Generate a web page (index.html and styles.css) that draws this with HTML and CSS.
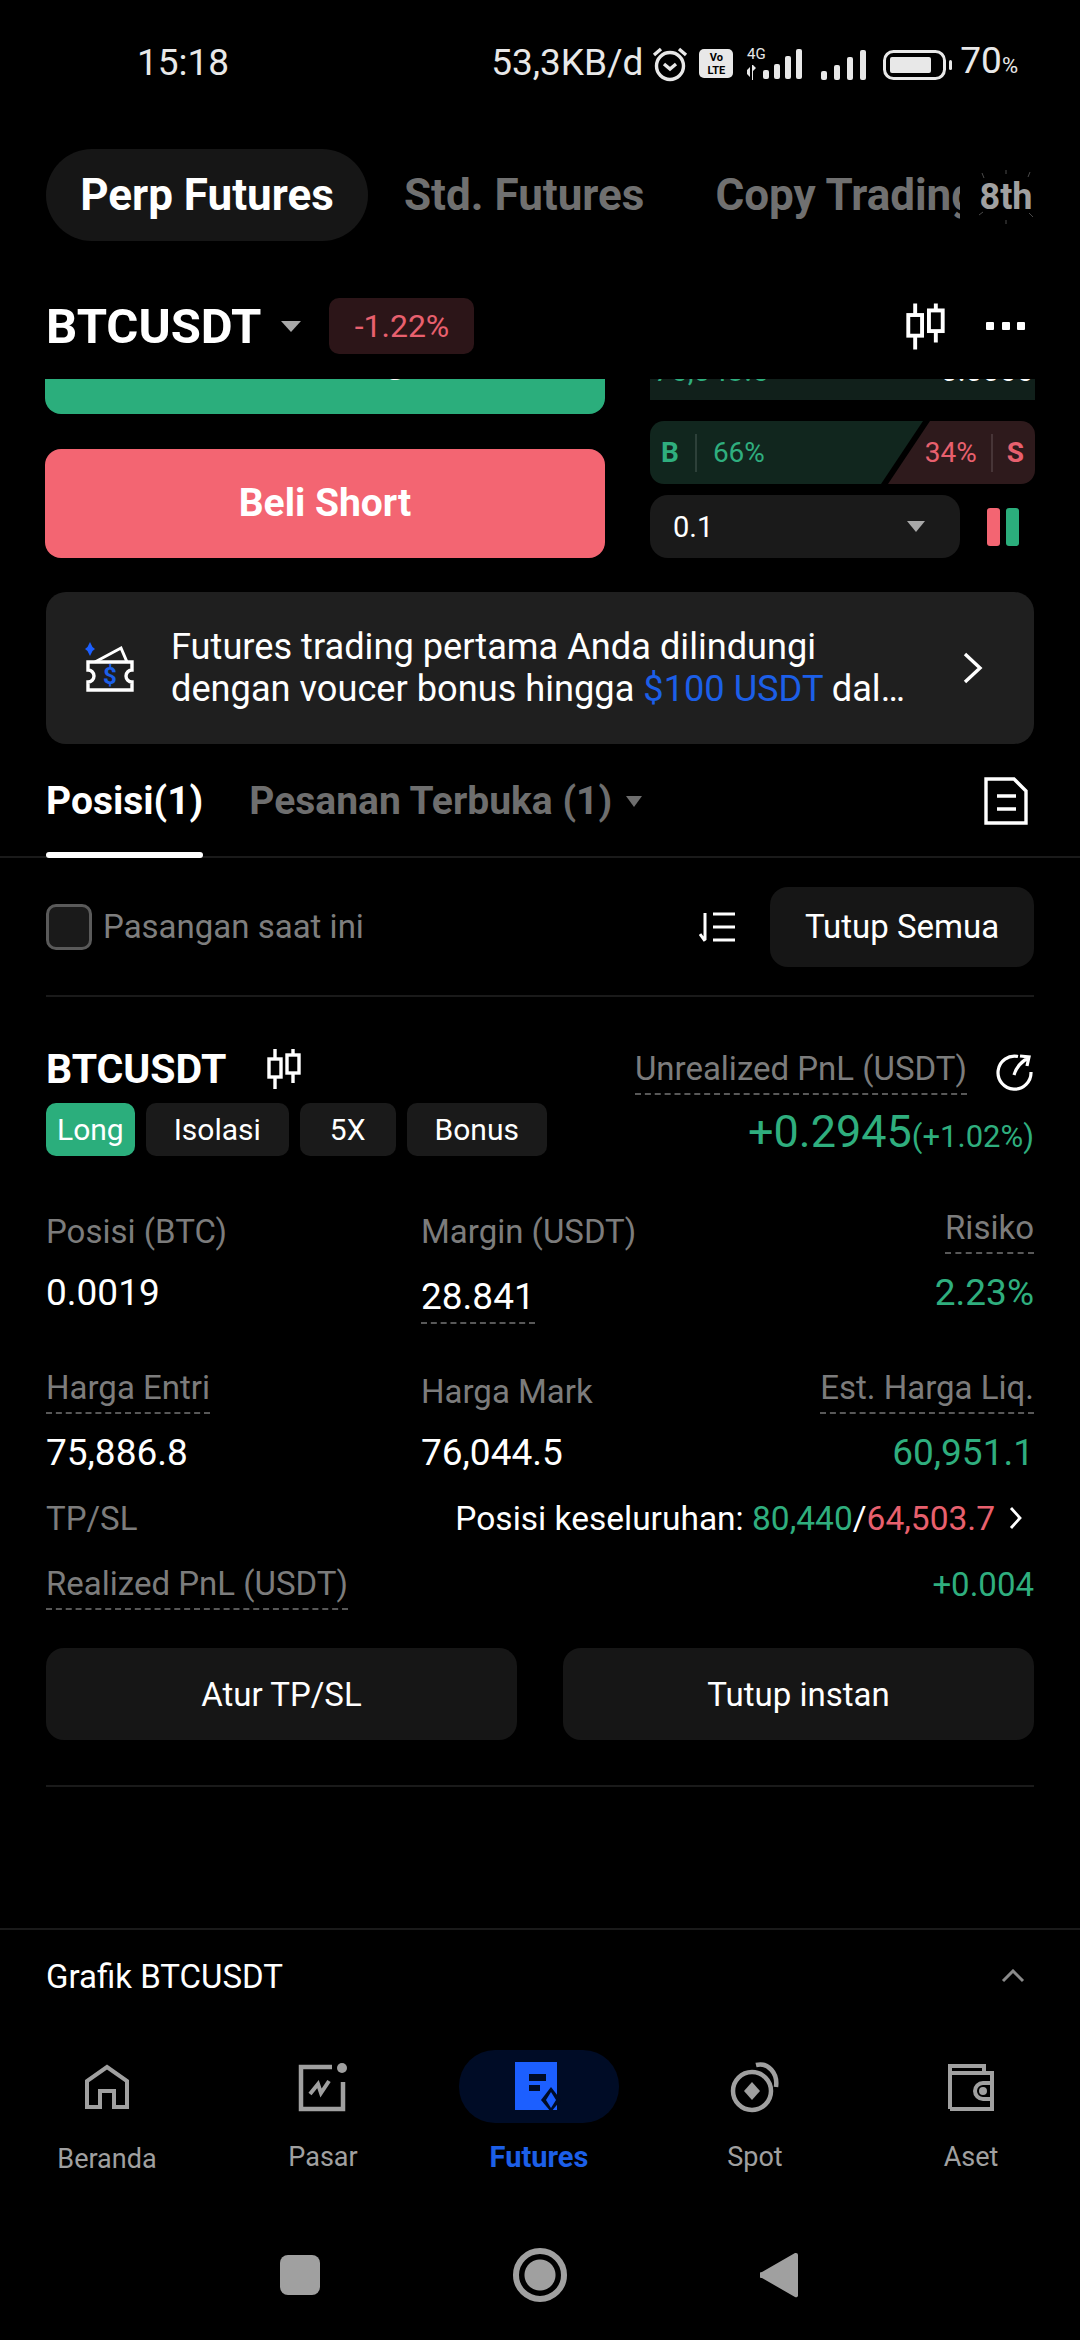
FILE: index.html
```html
<!DOCTYPE html>
<html lang="id">
<head>
    <meta charset="UTF-8">
    <meta name="viewport" content="width=device-width, initial-scale=1.0">
    <title>Futures</title>
    <link rel="stylesheet" href="styles.css">
</head>
<body>
    <svg class="defs" width="0" height="0">
        <symbol id="candle" viewBox="0 0 34 40">
            <path d="M8 0v9M8 29v11M26 0v5M26 25v9" stroke="currentColor" stroke-width="3.4" fill="none"/>
            <rect x="2" y="10" width="12" height="18" fill="none" stroke="currentColor" stroke-width="3.4"/>
            <rect x="20" y="6" width="12" height="18" fill="none" stroke="currentColor" stroke-width="3.4"/>
        </symbol>
    </svg>
    <div class="phone">
        <div class="status">
            <span class="clock">15:18</span>
            <div class="status-right">
                <span class="speed">53,3KB/d</span>
                <svg class="ic-alarm" width="38" height="36" viewBox="0 0 38 36" fill="none" stroke="#e8e8e8" stroke-width="3.4">
                    <circle cx="19" cy="20" r="13.5"/>
                    <path d="M13 18l6 5 6-5M3 9l7-6M35 9l-7-6"/>
                </svg>
                <span class="volte">Vo<br>LTE</span>
                <svg class="ic-sig1" width="63" height="34" viewBox="0 0 63 34" fill="#e8e8e8">
                    <text x="2" y="13" class="sig-text">4G</text>
                    <path d="M2 24l3-3v10l-3-3zM8 19l3 3-3 3v9h-1V19z"/>
                    <rect x="18" y="24" width="6" height="9" rx="2"/>
                    <rect x="29" y="18" width="6" height="15" rx="2"/>
                    <rect x="40" y="10" width="6" height="23" rx="2"/>
                    <rect x="51" y="3" width="6" height="30" rx="2"/>
                </svg>
                <svg class="ic-sig2" width="47" height="30" viewBox="0 0 47 30" fill="#e8e8e8">
                    <rect x="0" y="21" width="6" height="9" rx="2"/>
                    <rect x="13" y="15" width="6" height="15" rx="2"/>
                    <rect x="26" y="7" width="6" height="23" rx="2"/>
                    <rect x="39" y="0" width="6" height="30" rx="2"/>
                </svg>
                <svg class="ic-batt" width="70" height="30" viewBox="0 0 70 30">
                    <rect x="1.5" y="1.5" width="60" height="27" rx="9" fill="none" stroke="#e8e8e8" stroke-width="3"/>
                    <rect x="7" y="7" width="41" height="16" rx="2" fill="#e8e8e8"/>
                    <rect x="66" y="10" width="3" height="10" rx="1.5" fill="#e8e8e8"/>
                </svg>
                <span class="batt-pct">70<small>%</small></span>
            </div>
        </div>

        <div class="top-tabs">
            <div class="top-tab active">Perp Futures</div>
            <div class="top-tab">Std. Futures</div>
            <div class="top-tab cut">Copy Trading</div>
            <div class="badge-8th">8th
                <svg class="sparks" width="60" height="56" viewBox="0 0 60 56" stroke="#4a4a4a" stroke-width="1" fill="none">
                    <path d="M6 4l2 5M30 1v4M54 3l-2 5M3 46l4-3M30 55v-4M57 48l-4-4"/>
                </svg>
            </div>
        </div>

        <div class="symbol-bar">
            <span class="symbol">BTCUSDT</span>
            <span class="tri tri-big"></span>
            <span class="change">-1.22%</span>
            <svg class="sym-candle" width="39" height="47"><use href="#candle"/></svg>
            <span class="dots"><i></i><i></i><i></i></span>
        </div>

        <div class="trade">
            <div class="trade-left">
                <div class="long-clip"><div class="btn-long">Beli Long</div></div>
                <div class="btn-short">Beli Short</div>
            </div>
            <div class="trade-right">
                <div class="book-clip">
                    <div class="book-row"><span class="green">76,043.6</span><span>0.0066</span></div>
                </div>
                <div class="ratio">
                    <div class="ratio-buy"><b>B</b><i></i><span>66%</span></div>
                    <div class="ratio-sell"><span>34%</span><i></i><b>S</b></div>
                </div>
                <div class="depth-row">
                    <div class="depth-select"><span>0.1</span><span class="tri tri-small"></span></div>
                    <div class="depth-bars"><i class="bar-red"></i><i class="bar-green"></i></div>
                </div>
            </div>
        </div>

        <div class="banner">
            <svg class="ic-voucher" width="50" height="52" viewBox="0 0 50 52" fill="none">
                <path d="M5 0l2.500 5 2.500 2-2.500 2-2.500 5-2.500-5L0 7l2.500-2z" fill="#1c5fff"/>
                <path d="M10 20L36 6l6 14" stroke="#fff" stroke-width="3"/>
                <path d="M3 20h44v8a6 6 0 000 12v8H3v-8a6 6 0 000-12z" stroke="#fff" stroke-width="3.400"/>
                <text x="25" y="42" class="voucher-text">$</text>
            </svg>
            <div class="banner-text">Futures trading pertama Anda dilindungi<br>dengan voucer bonus hingga <span class="blue">$100 USDT</span> dal…</div>
            <svg width="22" height="32" viewBox="0 0 22 32" fill="none" stroke="#fff" stroke-width="3.400"><path d="M3 2l15 14L3 30"/></svg>
        </div>

        <div class="order-tabs">
            <div class="order-tab active">Posisi(1)</div>
            <div class="order-tab">Pesanan Terbuka (1)</div>
            <span class="tri tri-tab"></span>
            <svg class="ic-doc" width="44" height="48" viewBox="0 0 44 48" fill="none" stroke="#fff" stroke-width="3.400">
                <path d="M2 2h28l12 12v32H2z"/>
                <path d="M13 19h19M13 32h19"/>
            </svg>
        </div>

        <div class="filter-row">
            <span class="checkbox"></span>
            <span class="filter-label">Pasangan saat ini</span>
            <svg class="ic-sort" width="37" height="32" viewBox="0 0 37 32" fill="none" stroke="#fff" stroke-width="3">
                <path d="M6 2v27M1 23l5 7M14 3h22M14 16h22M14 29h22"/>
            </svg>
            <div class="btn-dark close-all">Tutup Semua</div>
        </div>

        <div class="position">
            <div class="pos-head">
                <div class="pos-left">
                    <div class="pos-title"><span>BTCUSDT</span><svg width="34" height="40"><use href="#candle"/></svg></div>
                    <div class="tags">
                        <span class="tag tag-long">Long</span>
                        <span class="tag">Isolasi</span>
                        <span class="tag tag-5x">5X</span>
                        <span class="tag">Bonus</span>
                    </div>
                </div>
                <div class="pos-right">
                    <div class="pnl-label"><span class="label dotted">Unrealized PnL (USDT)</span>
                        <svg width="40" height="38" viewBox="0 0 40 38" fill="none" stroke="#fff" stroke-width="3.200">
                            <path d="M24 3.500A16.500 16.500 0 1037 19"/>
                            <path d="M20 22C22 15 27 9 34 5M26 3l9 1-2 9"/>
                        </svg>
                    </div>
                    <div class="pnl-value green">+0.2945<small>(+1.02%)</small></div>
                </div>
            </div>

            <div class="stats stats-one">
                <span class="label">Posisi (BTC)</span>
                <span class="label">Margin (USDT)</span>
                <span class="label dotted right">Risiko</span>
                <span class="value">0.0019</span>
                <span class="value dotted-value">28.841</span>
                <span class="value green right">2.23%</span>
            </div>
            <div class="stats stats-two">
                <span class="label dotted">Harga Entri</span>
                <span class="label">Harga Mark</span>
                <span class="label dotted right">Est. Harga Liq.</span>
                <span class="value">75,886.8</span>
                <span class="value">76,044.5</span>
                <span class="value green right">60,951.1</span>
            </div>

            <div class="line-row tpsl">
                <span class="label">TP/SL</span>
                <span class="tpsl-val">
                    <span>Posisi keseluruhan: <span class="green">80,440</span>/<span class="red">64,503.7</span></span>
                    <svg width="14" height="24" viewBox="0 0 14 24" fill="none" stroke="#fff" stroke-width="2.800"><path d="M2 2l9 10-9 10"/></svg>
                </span>
            </div>
            <div class="line-row realized">
                <span class="label dotted">Realized PnL (USDT)</span>
                <span class="green realized-val">+0.004</span>
            </div>

            <div class="pos-actions">
                <div class="btn-dark">Atur TP/SL</div>
                <div class="btn-dark">Tutup instan</div>
            </div>
        </div>

        <div class="chart-row">
            <span>Grafik BTCUSDT</span>
            <svg width="24" height="14" viewBox="0 0 24 14" fill="none" stroke="#8a8a8a" stroke-width="3"><path d="M2 12L12 2l10 10"/></svg>
        </div>

        <nav class="tabbar">
            <div class="tab">
                <div class="tab-icon">
                    <svg width="46" height="46" viewBox="0 0 46 46" fill="none" stroke="#a0a0a0" stroke-width="4">
                        <path d="M3 43V17L23 3l20 14v26H30V27H16v16z"/>
                    </svg>
                </div>
                <span class="tab-label lower">Beranda</span>
            </div>
            <div class="tab">
                <div class="tab-icon">
                    <svg width="50" height="50" viewBox="0 0 50 50" fill="none">
                        <path d="M34 5H3v42h42V20" stroke="#a0a0a0" stroke-width="4.500"/>
                        <circle cx="44" cy="6" r="5" fill="#a0a0a0"/>
                        <path d="M12 32l8-10 3 9 8-12" stroke="#a0a0a0" stroke-width="4"/>
                    </svg>
                </div>
                <span class="tab-label">Pasar</span>
            </div>
            <div class="tab active">
                <div class="tab-icon">
                    <svg width="48" height="50" viewBox="0 0 48 50">
                        <rect x="0" y="0" width="42" height="48" fill="#1c5fff"/>
                        <rect x="14" y="12" width="17" height="7" fill="#000c26"/>
                        <rect x="14" y="23" width="11" height="6" fill="#000c26"/>
                        <path d="M36 25l10 13-10 12-10-12z" fill="#000c26"/>
                        <path d="M36 30l5 8-5 8-5-8z" fill="#1c5fff"/>
                    </svg>
                </div>
                <span class="tab-label">Futures</span>
            </div>
            <div class="tab">
                <div class="tab-icon">
                    <svg width="54" height="54" viewBox="0 0 54 54" fill="none" stroke="#a0a0a0">
                        <circle cx="24" cy="31" r="19" stroke-width="4.500"/>
                        <path d="M24 22l8 9-8 9-8-9z" fill="#a0a0a0" stroke="none"/>
                        <path d="M28 5c12-3 22 8 20 22" stroke-width="4.500"/>
                    </svg>
                </div>
                <span class="tab-label">Spot</span>
            </div>
            <div class="tab">
                <div class="tab-icon">
                    <svg width="48" height="48" viewBox="0 0 48 48" fill="none" stroke="#a0a0a0" stroke-width="4">
                        <path d="M3 46V3h34v7"/>
                        <path d="M3 10h42v36H3"/>
                        <path d="M45 20H36a8 8 0 000 16h9"/>
                        <circle cx="36" cy="28" r="2" fill="#a0a0a0"/>
                    </svg>
                </div>
                <span class="tab-label">Aset</span>
            </div>
        </nav>

        <div class="sysnav">
            <span class="sys-square"></span>
            <span class="sys-circle"></span>
            <svg width="38" height="46" viewBox="0 0 38 46"><path d="M36 1a2 2 0 012 2v40a2 2 0 01-3 2L2 26a3 3 0 010-6L35 1z" fill="#a0a0a0"/></svg>
        </div>
    </div>
</body>
</html>
```

FILE: styles.css
```css
* {
    box-sizing: border-box;
}

html, body {
    margin: 0;
    padding: 0;
    background-color: #000;
}

body {
    font-family: Roboto, "Liberation Sans", sans-serif;
    color: #fff;
}

.defs {
    position: absolute;
}

.phone {
    width: 1080px;
    height: 2340px;
    overflow: hidden;
}

.green { color: #2fae7e; }
.red { color: #e8606e; }
.blue { color: #1c5fe8; }

/* status bar */
.status {
    height: 149px;
    padding: 42px 62px 0 137px;
    display: flex;
    justify-content: space-between;
    align-items: flex-start;
    font-size: 37px;
    line-height: 42px;
    color: #e8e8e8;
}

.status-right {
    display: flex;
    align-items: center;
    height: 42px;
}

.ic-alarm { margin-left: 8px; margin-top: 1px; }
.ic-sig1 { margin-left: 12px; }
.ic-sig2 { margin-left: 13px; margin-top: 4px; }
.ic-batt { margin-left: 15px; margin-top: 4px; }

.sig-text {
    font-size: 15px;
    fill: #e8e8e8;
}

.volte {
    margin-left: 10px;
    width: 34px;
    height: 29px;
    background-color: #e8e8e8;
    border-radius: 5px;
    color: #000;
    font-size: 11px;
    line-height: 13px;
    font-weight: 700;
    text-align: center;
    padding-top: 2px;
}

.batt-pct {
    margin-left: 7px;
}

.batt-pct small {
    font-size: 22px;
}

/* top tabs */
.top-tabs {
    height: 92px;
    padding-left: 46px;
    display: flex;
    align-items: center;
    position: relative;
    font-size: 44px;
    font-weight: 700;
    color: #707070;
}

.top-tab {
    white-space: nowrap;
}

.top-tab.active {
    width: 322px;
    height: 92px;
    border-radius: 46px;
    background-color: #161616;
    color: #fff;
    display: flex;
    align-items: center;
    justify-content: center;
}

.top-tab:nth-child(2) {
    margin-left: 36px;
}

.top-tab.cut {
    margin-left: 71px;
    width: 245px;
    overflow: hidden;
}

.badge-8th {
    position: absolute;
    left: 976px;
    top: 20px;
    width: 60px;
    height: 56px;
    font-size: 36px;
    line-height: 56px;
    color: #a0a0a0;
    text-align: center;
}

.sparks {
    position: absolute;
    left: 0;
    top: 0;
}

/* symbol */
.symbol-bar {
    height: 138px;
    padding: 57px 55px 25px 46px;
    display: flex;
    align-items: center;
}

.symbol {
    font-size: 49px;
    font-weight: 700;
}

.tri {
    width: 0;
    height: 0;
    border-left: 10px solid transparent;
    border-right: 10px solid transparent;
    border-top: 11px solid #a8a8a8;
}

.tri-big {
    margin-left: 20px;
}

.change {
    margin-left: 28px;
    width: 145px;
    height: 56px;
    background-color: #2c1518;
    border-radius: 10px;
    color: #e8606e;
    font-size: 32px;
    line-height: 56px;
    text-align: center;
}

.sym-candle {
    margin-left: auto;
    color: #fff;
}

.dots {
    margin-left: 41px;
    width: 39px;
    display: flex;
    justify-content: space-between;
}

.dots i {
    width: 8px;
    height: 8px;
    background-color: #fff;
    border-radius: 1px;
}

/* trade area, scrolled under the symbol bar */
.trade {
    height: 179px;
    padding: 0 45px;
    display: flex;
    justify-content: space-between;
}

.trade-left {
    width: 560px;
}

.long-clip {
    height: 35px;
    overflow: hidden;
}

.btn-long, .btn-short {
    height: 109px;
    border-radius: 16px;
    font-size: 39px;
    font-weight: 700;
    text-align: center;
    line-height: 109px;
}

.btn-long {
    margin-top: -74px;
    background-color: #2bae7c;
}

.btn-short {
    margin-top: 35px;
    background-color: #f36572;
}

.trade-right {
    width: 385px;
}

.book-clip {
    height: 21px;
    overflow: hidden;
    background-color: #11201b;
}

.book-row {
    margin-top: -26px;
    padding: 0 2px 0 4px;
    display: flex;
    justify-content: space-between;
    font-size: 30px;
    line-height: 36px;
}

.ratio {
    margin-top: 21px;
    height: 63px;
    display: flex;
    font-size: 28px;
}

.ratio-buy, .ratio-sell {
    display: flex;
    align-items: center;
    height: 63px;
}

.ratio-buy {
    width: 273px;
    padding-left: 11px;
    background-color: #11261e;
    border-radius: 14px 0 0 14px;
    clip-path: polygon(0 0, 100% 0, 231px 100%, 0 100%);
    color: #2fae7e;
}

.ratio-sell {
    width: 147px;
    margin-left: -35px;
    justify-content: flex-end;
    padding-right: 11px;
    background-color: #2e1a1c;
    border-radius: 0 14px 14px 0;
    clip-path: polygon(42px 0, 100% 0, 100% 100%, 0 100%);
    color: #e8606e;
}

.ratio i {
    width: 2px;
    height: 38px;
    background-color: rgba(255, 255, 255, 0.12);
    margin: 0 16px;
}

.ratio-sell i {
    margin: 0 14px;
}

.depth-row {
    margin-top: 11px;
    display: flex;
    align-items: center;
}

.depth-select {
    width: 310px;
    height: 63px;
    padding: 0 35px 0 23px;
    border-radius: 18px;
    background-color: #1a1a1a;
    display: flex;
    align-items: center;
    justify-content: space-between;
    font-size: 29px;
}

.tri-small {
    border-left-width: 9px;
    border-right-width: 9px;
}

.depth-bars {
    margin-left: 27px;
    display: flex;
    gap: 6px;
}

.depth-bars i {
    width: 13px;
    height: 38px;
    border-radius: 3px;
}

.bar-red { background-color: #f36572; }
.bar-green { background-color: #2bae7c; }

/* banner */
.banner {
    margin: 34px 46px 0;
    height: 152px;
    padding: 0 50px 0 39px;
    border-radius: 20px;
    background-color: #1f1f1f;
    display: flex;
    align-items: center;
}

.banner-text {
    flex: 1;
    margin-left: 36px;
    font-size: 36.2px;
    line-height: 42px;
}

.voucher-text {
    font-size: 24px;
    font-weight: 700;
    fill: #1c5fe8;
    text-anchor: middle;
}

/* position tabs */
.order-tabs {
    height: 114px;
    padding: 2px 52px 0 46px;
    display: flex;
    align-items: center;
    border-bottom: 2px solid #1a1a1a;
    position: relative;
    font-size: 39px;
    font-weight: 700;
    color: #6e6e6e;
}

.order-tab.active {
    color: #fff;
}

.order-tab.active::after {
    content: "";
    position: absolute;
    left: 46px;
    bottom: -2px;
    width: 157px;
    height: 6px;
    border-radius: 3px;
    background-color: #fff;
}

.order-tab:nth-child(2) {
    margin-left: 46px;
}

.tri-tab {
    margin-left: 14px;
    border-left-width: 8px;
    border-right-width: 8px;
    border-top-color: #6e6e6e;
}

.ic-doc {
    margin-left: auto;
}

.filter-row {
    margin: 0 46px;
    height: 139px;
    border-bottom: 2px solid #1a1a1a;
    display: flex;
    align-items: center;
}

.checkbox {
    width: 46px;
    height: 46px;
    border: 3px solid #5a5a5a;
    border-radius: 10px;
    background-color: #1a1a1a;
}

.filter-label {
    margin-left: 11px;
    font-size: 33px;
    color: #7e7e7e;
}

.ic-sort {
    margin-left: auto;
}

.btn-dark {
    height: 92px;
    border-radius: 18px;
    background-color: #161616;
    display: flex;
    align-items: center;
    justify-content: center;
    font-size: 33px;
}

.close-all {
    width: 264px;
    height: 80px;
    margin-left: 34px;
}

/* position card */
.position {
    margin: 0 46px;
    height: 790px;
    border-bottom: 2px solid #1a1a1a;
}

.pos-head {
    padding-top: 51px;
    height: 159px;
    display: flex;
    justify-content: space-between;
}

.pos-title {
    display: flex;
    align-items: center;
    height: 41px;
    font-size: 41px;
    font-weight: 700;
}

.pos-title svg {
    margin-left: 41px;
    color: #fff;
}

.tags {
    margin-top: 14px;
    display: flex;
    gap: 11px;
}

.tag {
    height: 53px;
    padding: 0 28px;
    border-radius: 10px;
    background-color: #1a1a1a;
    font-size: 30px;
    line-height: 53px;
}

.tag-5x {
    padding: 0 30px;
}

.tag-long {
    padding: 0 11px;
    background-color: #2bae7c;
}

.pos-right {
    text-align: right;
}

.pnl-label {
    margin-top: 1px;
    display: flex;
    align-items: center;
    justify-content: flex-end;
    gap: 27px;
}

.label {
    font-size: 33px;
    color: #7c7c7c;
}

.dotted {
    padding-bottom: 5px;
    border-bottom: 2px dashed #585858;
}

.pnl-value {
    margin-top: 11px;
    font-size: 45px;
    line-height: 52px;
}

.pnl-value small {
    font-size: 31px;
}

.stats {
    display: grid;
    grid-template-columns: 375px 1fr auto;
    grid-template-rows: 50px 50px;
    row-gap: 11px;
    align-items: center;
}

.stats .label {
    justify-self: start;
}

.stats .right {
    justify-self: end;
}

.stats-one {
    margin-top: 50px;
}

.stats-two {
    margin-top: 49px;
}

.value {
    font-size: 37px;
}

.dotted-value {
    justify-self: start;
    margin-top: 15px;
    padding-bottom: 4px;
    border-bottom: 2px dashed #585858;
}

.line-row {
    display: flex;
    justify-content: space-between;
    align-items: center;
}

.tpsl {
    margin-top: 16px;
    height: 50px;
}

.tpsl-val {
    font-size: 33.5px;
    display: flex;
    align-items: center;
}

.tpsl-val svg {
    margin-left: 14px;
    margin-right: 11px;
}

.realized {
    margin-top: 17px;
    height: 54px;
}

.realized-val {
    font-size: 33px;
    margin-bottom: 6px;
}

.pos-actions {
    margin-top: 34px;
    display: flex;
    justify-content: space-between;
}

.pos-actions .btn-dark {
    width: 471px;
}

.chart-row {
    margin-top: 141px;
    height: 94px;
    padding: 0 55px 0 46px;
    border-top: 2px solid #1a1a1a;
    display: flex;
    align-items: center;
    justify-content: space-between;
    font-size: 33px;
}

/* bottom tabs */
.tabbar {
    padding: 28px 0 0 35px;
    display: flex;
    font-size: 27px;
    color: #a0a0a0;
}

.tab {
    width: 144px;
    margin-right: 72px;
    display: flex;
    flex-direction: column;
    align-items: center;
}

.tab-icon {
    width: 160px;
    height: 73px;
    border-radius: 36px;
    display: flex;
    align-items: center;
    justify-content: center;
}

.tab.active .tab-icon {
    background-color: #000c26;
}

.tab.active .tab-label {
    color: #1c5fe8;
    font-size: 29px;
    font-weight: 700;
}

.tab-label {
    margin-top: 17px;
    line-height: 34px;
}

.tab-label.lower {
    margin-top: 19px;
}

.sysnav {
    margin-top: 72px;
    padding: 0 282px 0 280px;
    display: flex;
    align-items: center;
    justify-content: space-between;
}

.sys-square {
    width: 40px;
    height: 40px;
    border-radius: 8px;
    background-color: #a0a0a0;
}

.sys-circle {
    width: 54px;
    height: 54px;
    border: 6px solid #a0a0a0;
    border-radius: 50%;
    position: relative;
    background: radial-gradient(circle, #a0a0a0 0 15px, #000 16px);
}
```
